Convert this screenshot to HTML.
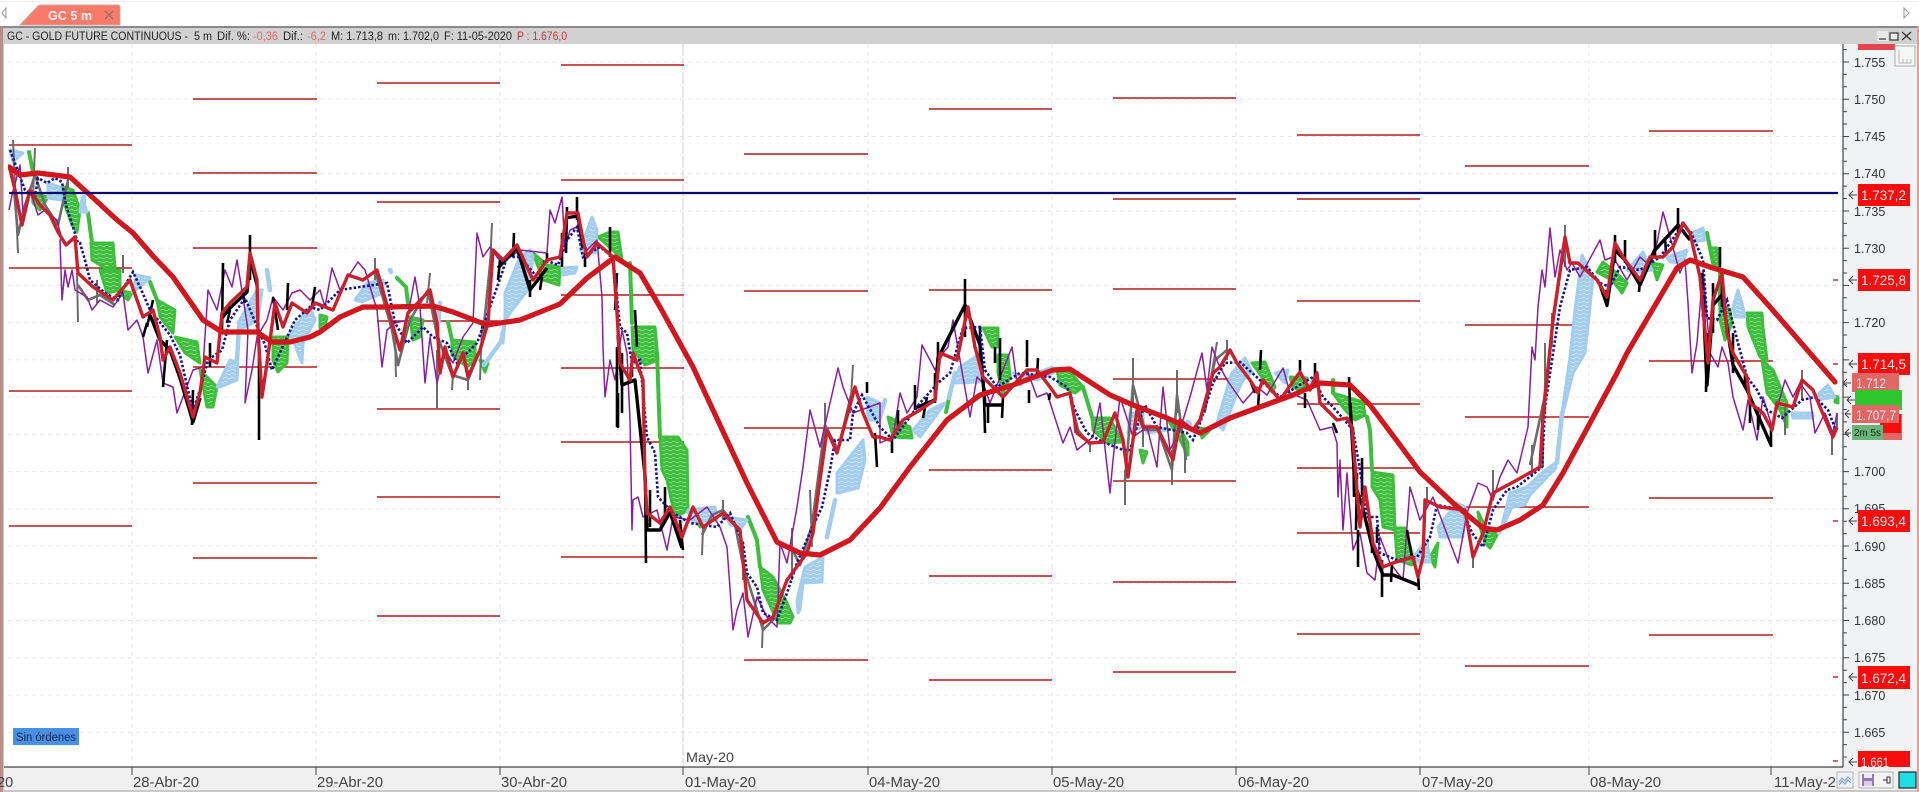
<!DOCTYPE html>
<html lang="es">
<head>
<meta charset="utf-8">
<title>GC 5 m</title>
<style>
html,body{margin:0;padding:0;width:1919px;height:792px;overflow:hidden;background:#fff}
svg{display:block;font-family:"Liberation Sans",Arial,sans-serif}
</style>
</head>
<body>
<svg width="1919" height="792" viewBox="0 0 1919 792" xmlns="http://www.w3.org/2000/svg">
<defs>
<pattern id="pg" width="7" height="4" patternUnits="userSpaceOnUse"><rect width="7" height="4" fill="#3dbf3d"/><path d="M0 2 Q1.7 .6 3.5 2 T7 2" fill="none" stroke="#a8e2a2" stroke-width=".7"/></pattern>
<pattern id="pb" width="7" height="4" patternUnits="userSpaceOnUse"><rect width="7" height="4" fill="#a2cdee"/><path d="M0 2 Q1.7 .6 3.5 2 T7 2" fill="none" stroke="#dcedfa" stroke-width=".7"/></pattern>
<clipPath id="chart"><rect x="8" y="44" width="1835" height="723"/></clipPath>
</defs>

<!-- window -->
<rect width="1919" height="792" fill="#fff"/>
<rect y="1" width="1919" height="1" fill="#eeeeee"/>
<path d="M6 8 L2 13 L6 18 Z" fill="none" stroke="#999"/>
<path d="M1904 8 L1909 13 L1904 18 Z" fill="none" stroke="#999"/>
<path d="M20 25 L38 6 Q39 5 41 5 L118 5 Q120 5 120 7 L120 25 Z" fill="#f97a6b" stroke="#c9a79f"/>
<text x="48" y="20" font-size="12.5" font-weight="bold" fill="#fdeeea" textLength="44" lengthAdjust="spacingAndGlyphs">GC 5 m</text>
<path d="M105 11 L113 19 M113 11 L105 19" stroke="#a06e66" stroke-width="1.3"/>

<rect y="26" width="1917" height="2" fill="#8a8a8a"/>
<rect y="28" width="1917" height="16" fill="#d1d1d1"/>
<rect x="0" y="26" width="3" height="766" fill="#b58f88"/>
<rect x="3" y="28" width="1" height="764" fill="#d8c8c4"/>
<rect x="1917" y="26" width="2" height="766" fill="#eb9c8e"/>

<!-- header text -->
<g font-size="11.5" fill="#222">
<text x="7" y="40" textLength="181" lengthAdjust="spacingAndGlyphs">GC - GOLD FUTURE CONTINUOUS -</text>
<text x="194" y="40" textLength="18" lengthAdjust="spacingAndGlyphs">5 m</text>
<text x="217" y="40" textLength="33" lengthAdjust="spacingAndGlyphs">Dif. %:</text>
<text x="253" y="40" textLength="25" lengthAdjust="spacingAndGlyphs" fill="#e26a6a">-0,36</text>
<text x="283" y="40" textLength="20" lengthAdjust="spacingAndGlyphs">Dif.:</text>
<text x="307" y="40" textLength="19" lengthAdjust="spacingAndGlyphs" fill="#e26a6a">-6,2</text>
<text x="331" y="40" textLength="52" lengthAdjust="spacingAndGlyphs">M: 1.713,8</text>
<text x="388" y="40" textLength="51" lengthAdjust="spacingAndGlyphs">m: 1.702,0</text>
<text x="444" y="40" textLength="68" lengthAdjust="spacingAndGlyphs">F: 11-05-2020</text>
<text x="517" y="40" textLength="50" lengthAdjust="spacingAndGlyphs" fill="#c8343c">P : 1.676,0</text>
</g>

<!-- axes backgrounds -->
<rect x="1843" y="44" width="74" height="723" fill="#f0f2f4"/>
<rect x="4" y="767" width="1913" height="23" fill="#f0f0f0"/>
<rect x="4" y="790" width="1913" height="2" fill="#c9c9c9"/>

<!-- grid -->
<g stroke="#e6e6e6" stroke-width="1" stroke-dasharray="4 4" fill="none">
<path d="M8 62H1843M8 99.2H1843M8 136.5H1843M8 173.7H1843M8 211H1843M8 248.2H1843M8 285.4H1843M8 322.6H1843M8 359.9H1843M8 397.1H1843M8 434.4H1843M8 471.6H1843M8 508.8H1843M8 546H1843M8 583.3H1843M8 620.5H1843M8 657.8H1843M8 695H1843M8 732.2H1843"/>
<path d="M132 44V767M316 44V767M500 44V767M868 44V767M1052 44V767M1236 44V767M1420 44V767M1589 44V767M1771 44V767"/>
</g>
<path d="M683 44V767" stroke="#cfcfcf" stroke-width="1" stroke-dasharray="12 2"/>

<!-- pivot lines -->
<path fill="none" stroke="#ad1f1f" stroke-width="1.4" d="
M9 145H132M9 268H132M9 391H132M9 526H132
M193 99H317M193 173H317M193 248H317M193 367H317M193 483H317M193 558H317
M377 83H500M377 202H500M377 321H500M377 409H500M377 497H500M377 616H500
M561 65H684M561 180H684M561 295H684M561 368H684M561 442H684M561 557H684
M744 154H868M744 291H868M744 428H868M744 660H868
M929 109H1052M929 290H1052M929 470H1052M929 576H1052M929 680H1052
M1113 98H1236M1113 199H1236M1113 289H1236M1113 379H1236M1113 481H1236M1113 582H1236M1113 672H1236
M1297 135H1420M1297 199H1420M1297 301H1420M1297 404H1420M1297 468H1420M1297 533H1420M1297 634H1420
M1465 166H1589M1465 325H1589M1465 417H1589M1465 507H1589M1465 666H1589
M1649 131H1773M1649 361H1773M1649 498H1773M1649 635H1773"/>
<path fill="none" stroke="#c83030" stroke-width="1.5" d="M1833 280h5M1833 364h5M1833 521h5M1833 677h5M1833 761h5"/>

<g clip-path="url(#chart)">
<!-- clouds: green -->
<path fill="url(#pg)" stroke="#3dbf3d" stroke-width="3" stroke-linejoin="round" d="
M32 193L48 197L40 210L33 203Z
M63 187L73 190L80 210L77 232L72 225L63 200Z
M91 243L113 243L115 267L105 268L92 260Z
M100 270L120 270L120 290L107 293Z
M117 290L132 293L128 300Z
M157 300L175 310L173 333L160 317Z
M175 337L197 342L200 363L185 353Z
M200 370L217 387L213 407L207 407Z
M273 337L288 337L287 363L278 372L273 360Z
M320 315L327 317L325 327L320 328Z
M410 317L423 320L420 337L413 340Z
M452 340L475 342L475 360L467 367L452 355Z
M480 360L488 363L485 372Z
M533 253L547 265L560 267L559 285L543 280Z
M598 237L610 232L618 232L622 260L615 252Z
M632 327L655 327L658 360L645 365L633 350Z
M660 437L678 437L687 450L688 510L675 517L667 480L662 470Z
M695 513L702 515L700 527Z
M760 567L773 577L787 603L793 617L790 623L778 623L763 590Z
M888 417L910 427L912 438L893 437Z
M983 328L998 328L998 347L992 347Z
M998 355L1008 355L1010 377L1003 393L998 373Z
M1057 370L1070 372L1083 387L1075 393L1060 385Z
M1092 418L1110 418L1122 442L1107 443L1093 430Z
M1140 450L1147 452L1143 463Z
M1168 420L1177 423L1188 443L1188 455L1180 440Z
M1200 428L1210 430L1202 438Z
M1252 363L1265 362L1275 387L1272 392L1257 370Z
M1290 377L1307 378L1302 392L1293 387Z
M1333 393L1363 402L1365 415L1355 420L1345 410Z
M1372 472L1393 475L1395 530L1383 527L1380 500L1372 487Z
M1395 528L1405 528L1413 557L1412 565L1397 560Z
M1430 557L1438 543L1435 567Z
M1478 512L1487 530L1497 535L1490 548L1485 543L1480 527Z
M1597 272L1603 262L1613 270L1627 283L1622 293L1612 280Z
M1652 263L1663 265L1657 280Z
M1710 248L1717 248L1720 270L1715 268Z
M1720 303L1730 310L1732 323L1725 340L1720 320Z
M1747 313L1762 313L1763 327L1767 360L1760 357L1748 327Z
M1762 360L1773 370L1787 403L1787 427L1780 410L1767 393Z
M1835 396l3 1l0 6l-3 -1Z"/>
<path fill="none" stroke="#3dbf3d" stroke-width="4" stroke-linecap="round" stroke-linejoin="round" d="
M29 152L33 172M88 213L92 243M150 282L157 300M397 278L406 287L408 303M448 322L452 340M630 263L632 323M657 353L660 437M748 517L757 540L760 567M1083 387L1092 417M1333 380L1333 393M1367 417L1370 430L1372 470M1707 233L1713 263M1720 270L1720 305M949 398L946 412"/>

<!-- clouds: blue -->
<path fill="url(#pb)" stroke="#a2cdee" stroke-width="3" stroke-linejoin="round" d="
M10 150L23 153L13 162Z
M48 183L60 187L62 200L48 198Z
M82 198L87 212L80 212Z
M137 275L150 278L140 287L132 292Z
M217 387L230 360L238 363L237 380L220 387Z
M238 323L257 290L262 290L258 320L240 330Z
M290 333L310 307L315 320L303 343L302 363Z
M355 300L367 283L383 280L383 293L362 302Z
M500 343L505 320L505 293L520 257L530 250L533 257L528 290L510 313L505 322L503 343Z
M562 268L577 267L575 273L563 275Z
M580 250L592 217L597 230L595 253L583 253Z
M688 510L715 507L717 520L693 522Z
M727 517L747 520L742 527L730 525Z
M798 613L797 600L805 567L823 557L822 582L803 583L800 610Z
M837 493L837 473L863 440L865 460L858 488L838 493Z
M867 397L880 403L880 420L868 420Z
M913 430L930 410L945 403L935 417L920 437Z
M952 383L960 367L978 355L980 382L953 383Z
M1013 373L1027 377L1052 367L1053 373L1037 380Z
M1130 413L1143 413L1143 427L1128 433Z
M1147 425L1167 430L1147 433Z
M1217 423L1228 385L1232 373L1245 358L1252 372L1243 380L1237 393L1223 430Z
M1275 373L1288 370L1285 383Z
M1310 385L1317 372L1318 380Z
M1413 557L1427 540L1430 562L1417 562Z
M1438 527L1457 503L1465 507L1463 537L1440 537Z
M1500 533L1510 493L1527 487L1543 472L1555 463L1556 468L1530 495L1525 505L1512 507Z
M1562 413L1570 357L1575 310L1582 255L1593 277L1590 307L1585 353L1573 373L1563 413Z
M1627 270L1643 252L1652 270L1633 273Z
M1667 257L1687 250L1683 263L1670 262Z
M1692 233L1703 228L1705 240L1693 242Z
M1733 307L1738 290L1743 307L1745 317L1735 317Z
M1792 413L1813 413L1813 418L1793 418Z
M1815 397L1828 385L1835 397L1817 400Z"/>
<path fill="none" stroke="#a2cdee" stroke-width="4.5" stroke-linecap="round" stroke-linejoin="round" d="
M239 327L237 360M267 270L270 290M440 303L437 337M390 270L391 272M484 365L500 343M827 537L835 500M949 398L955 373M885 400L880 417M1557 463L1562 413M692 510L688 512M1020 382L1021 384M1188 422L1190 424M84 197L84 205"/>

<!-- gray bars -->
<path fill="none" stroke="#6c6c6c" stroke-width="2" d="
M13 140L18 253M35 148L33 197M68 167L68 188M77 273L78 322M123 255L123 273M97 280L97 303
M375 258L375 280M395 337L396 377M430 273L427 303M437 350L437 408M453 373L452 390M468 370L468 390M482 323L480 380M492 223L490 267
M703 527L702 555M723 500L723 520M743 543L743 580M763 620L762 648M792 528L792 580M810 490L812 547M825 403L825 447M853 365L850 413
M1133 358L1133 403M1125 470L1125 505M1072 397L1075 433M1090 443L1090 452M1143 427L1143 447M1177 370L1177 413M1172 450L1172 485M1185 447L1185 473
M1217 342L1205 413M1227 340L1227 360M1427 487L1427 507M1493 470L1493 493M1473 550L1473 568
M1532 445L1532 477M1543 417L1543 467M1545 343L1545 413M1552 313L1552 347M1565 225L1565 267M1802 370L1802 400M1785 407L1785 435M1832 430L1832 455M1837 413L1837 427"/>
<g fill="none" stroke="#6c6c6c" stroke-width="2.6" stroke-linejoin="round">
<polyline points="14,190 18,235 25,205 35,175 45,205 58,225 68,180"/>
<polyline points="78,285 88,300 100,295 115,305"/>
<polyline points="375,270 392,330 398,365 410,320 428,290 437,335 452,375 468,380 482,345 491,255"/>
<polyline points="702,535 712,515 723,510 735,525 743,565 757,610 763,630 775,618"/>
<polyline points="790,545 800,565 812,525 825,425 838,450 851,395"/>
<polyline points="1073,410 1078,430 1090,445"/>
<polyline points="1125,480 1133,385 1145,430 1158,430 1172,470 1177,395 1186,460"/>
<polyline points="1207,400 1215,360 1227,350"/>
<polyline points="1530,465 1544,400 1552,330 1565,240 1570,262"/>
</g>

<!-- purple -->
<polyline fill="none" stroke="#8a1f9e" stroke-width="1.5" stroke-linejoin="round" points="9,210 12,195 20,165 23,213 30,190 38,215 45,210 50,215 57,220 62,240 60,240 62,300 65,270 68,287 72,270 75,290 87,297 92,310 100,300 113,307 123,293 128,330 137,320 143,337 148,373 157,340 163,383 173,387 177,413 183,397 193,370 203,367 208,290 217,310 225,270 232,287 237,260 243,297 248,330 245,403 252,370 257,337 267,320 273,297 283,310 292,293 300,290 310,300 320,290 325,307 332,268 340,290 348,277 358,262 365,270 377,310 382,367 387,330 395,323 407,320 415,277 420,307 425,383 430,337 437,383 445,350 453,363 463,337 473,323 477,233 483,257 490,247 497,257 502,263 510,257 520,250 547,253 550,210 555,223 562,197 565,250 570,230 577,227 587,250 597,240 602,297 603,347 605,397 610,360 615,380 622,330 627,353 630,420 632,530 633,500 638,497 643,517 657,510 667,550 673,517 690,520 707,507 720,527 727,547 733,630 737,610 743,593 748,637 757,597 767,617 777,627 780,543 787,563 797,507 803,467 810,410 820,447 833,390 838,368 843,387 853,413 880,403 880,443 893,437 900,393 907,413 917,397 922,345 930,360 935,370 943,353 948,347 953,320 960,360 970,417 977,377 983,383 990,403 1012,347 1017,383 1027,370 1037,397 1047,393 1063,443 1070,427 1077,450 1093,437 1100,403 1110,493 1113,460 1120,397 1133,437 1147,427 1157,467 1163,387 1170,450 1180,430 1190,397 1200,360 1202,353 1207,390 1212,347 1218,363 1227,380 1243,403 1257,387 1267,395 1283,368 1290,393 1307,400 1320,430 1332,427 1337,443 1338,497 1340,460 1343,530 1347,473 1353,550 1360,533 1367,573 1375,580 1380,537 1390,563 1403,580 1410,487 1420,520 1433,497 1453,550 1458,563 1467,513 1478,483 1487,487 1493,500 1500,477 1508,460 1517,473 1528,427 1532,347 1535,360 1538,307 1542,270 1545,287 1550,228 1555,277 1560,250 1567,270 1572,263 1580,277 1600,240 1605,260 1613,257 1627,280 1640,257 1647,263 1657,243 1663,212 1670,237 1680,273 1685,260 1688,303 1692,373 1697,343 1703,270 1710,353 1718,367 1722,347 1728,363 1733,397 1743,430 1748,400 1757,440 1763,397 1772,427 1785,380 1793,397 1800,383 1810,397 1815,433 1825,413 1833,433 1837,413"/>

<!-- black bars -->
<path fill="none" stroke="#000" stroke-width="2.6" d="
M193 390L192 425M210 343L210 367M167 340L163 387M147 323L143 337M153 300L147 327M223 263L222 330M250 235L250 280M259 337L259 440M273 297L278 330M288 283L287 310M315 287L312 307M230 310L227 323M242 290L245 303
M500 260L498 280M514 233L513 257M530 280L530 297M542 277L540 290M547 253L547 263M562 233L562 267M567 207L566 253M577 197L577 220M585 253L585 267M610 227L610 257M617 273L615 310M622 357L622 400M618 393L618 428M632 357L632 377
M635 310L637 347M617 347L617 427M622 353L622 413M645 467L646 563M650 490L650 527M665 487L665 523M680 520L683 550M867 382L867 393M875 433L877 467
M892 437L892 453M898 410L898 430M915 385L915 410M927 397L923 418M935 373L935 403M938 342L938 367M965 279L965 337M980 327L980 357M984 397L985 433M988 403L988 423M1000 338L1000 380M995 347L995 363M1003 397L1002 418M1027 340L1027 367M1029 390L1029 403M1038 358L1037 377M1050 393L1049 400
M1261 350L1260 370M1259 393L1258 407M1250 380L1255 393M1300 360L1300 373M1315 363L1315 387M1305 393L1305 408M1349 377L1350 407M1333 423L1337 433M1353 427L1354 497M1357 473L1356 530M1362 458L1362 497M1358 530L1358 567M1372 540L1372 553M1377 527L1377 543M1382 560L1382 597M1392 563L1391 582M1407 530L1412 557M1418 573L1419 590
M1615 235L1615 263M1625 240L1625 263M1606 290L1607 307M1655 230L1655 257M1665 237L1666 253M1678 208L1678 233M1640 280L1639 292M1702 273L1703 317M1707 333L1706 392M1713 283L1713 333M1720 247L1720 267M1722 273L1722 307M1733 333L1733 373M1745 373L1745 387M1750 400L1750 423M1758 407L1758 430M1771 427L1771 447"/>
<g fill="none" stroke="#000" stroke-width="3.4" stroke-linejoin="round">
<polyline points="150,315 160,340 170,350 180,378 193,422 200,398"/>
<polyline points="222,318 230,308 247,292 250,258 257,285"/>
<polyline points="498,268 517,248 530,290 547,268"/>
<polyline points="565,218 578,216 583,248"/>
<polyline points="618,335 622,385 635,380 645,475 647,530 660,530 670,512 682,548"/>
<polyline points="915,408 935,400 938,358 965,305 980,345 985,405 1003,405"/>
<polyline points="1350,403 1355,485 1362,505 1373,550 1383,575 1393,575 1418,585"/>
<polyline points="1703,295 1707,385 1713,305 1722,295 1733,365 1747,390 1771,445"/>
<polyline points="1600,285 1607,305 1615,250 1625,260 1640,285 1655,250 1678,225 1690,240"/>
</g>

<!-- navy dotted -->
<polyline fill="none" stroke="#13139a" stroke-width="2.6" stroke-dasharray="2.5 2" points="10,150 25,190 35,197 38,178 47,183 55,178 62,182 66,205 78,243 80,243 85,260 90,280 105,293 118,300 125,285 133,272 140,287 150,310 170,335 180,355 188,390 193,410 200,390 208,360 222,350 230,320 245,298 265,345 272,370 295,320 310,307 320,310 340,290 353,288 387,283 395,323 407,343 423,327 433,337 447,343 457,363 477,343 490,307 502,273 507,257 520,257 537,277 545,260 558,265 567,240 577,227 583,257 600,247 613,257 620,327 627,333 632,363 640,360 647,437 655,453 658,497 673,513 690,523 717,527 730,513 743,543 747,573 757,587 763,613 777,620 787,593 797,563 808,537 822,507 830,470 835,440 850,440 853,413 862,395 880,427 893,440 920,403 938,383 950,373 963,328 980,327 985,370 997,387 1020,373 1050,377 1067,387 1075,410 1087,433 1103,442 1123,450 1130,450 1138,423 1145,405 1157,427 1187,433 1193,440 1200,423 1213,383 1225,363 1240,362 1260,380 1280,397 1313,377 1323,397 1333,407 1353,430 1360,470 1367,517 1377,517 1380,553 1397,560 1417,557 1430,537 1437,505 1463,510 1472,533 1483,547 1493,510 1507,490 1517,487 1542,467 1545,407 1560,307 1570,270 1587,267 1600,283 1610,287 1620,267 1640,270 1660,257 1677,233 1690,230 1703,260 1707,318 1717,320 1727,300 1738,343 1747,377 1757,390 1767,410 1782,418 1802,400 1815,397 1828,410 1835,428"/>

<!-- thin red -->
<polyline fill="none" stroke="#c9202c" stroke-width="3.4" stroke-linejoin="round" points="9,165 15,190 22,225 30,190 40,205 50,215 58,232 66,245 75,237 78,273 93,287 113,300 130,280 143,317 153,310 160,337 163,360 170,347 180,373 193,417 200,393 205,357 217,363 222,313 230,303 247,287 250,253 257,280 258,330 262,397 267,363 275,303 283,327 292,303 307,313 315,303 333,310 348,275 363,280 377,270 392,323 400,350 408,313 430,290 437,323 440,373 445,347 453,377 463,353 468,377 480,350 488,323 493,250 500,257 503,260 517,245 533,280 547,260 560,257 567,213 578,213 583,240 587,257 597,243 613,257 617,313 620,363 630,380 633,353 643,380 645,480 647,513 660,523 670,507 682,537 693,507 703,527 723,513 740,530 747,600 763,623 773,617 787,580 807,553 813,533 820,480 827,430 837,453 855,387 863,413 873,437 880,437 890,440 903,420 920,410 935,400 940,353 957,360 968,307 975,347 983,377 1003,397 1027,370 1037,370 1050,387 1057,397 1070,393 1077,433 1090,443 1103,442 1115,413 1123,440 1128,477 1137,410 1143,427 1157,427 1173,460 1180,420 1193,430 1200,420 1213,373 1220,367 1230,350 1237,363 1250,380 1258,393 1263,380 1280,400 1300,372 1310,390 1317,373 1320,403 1337,420 1347,418 1352,427 1357,490 1360,527 1365,487 1373,543 1383,567 1393,563 1413,557 1418,577 1423,557 1425,500 1440,507 1465,510 1473,557 1483,533 1493,493 1517,480 1540,467 1543,417 1553,320 1565,237 1570,263 1578,263 1597,280 1607,297 1615,243 1623,257 1640,280 1650,257 1663,257 1673,247 1683,223 1690,233 1700,277 1708,363 1713,300 1722,273 1727,333 1733,353 1747,377 1750,403 1763,413 1772,430 1777,403 1793,407 1802,380 1813,390 1820,407 1833,437 1837,427"/>

<!-- thick MA -->
<polyline fill="none" stroke="#d2161e" stroke-width="5.2" stroke-linejoin="round" stroke-linecap="round" points="9,167 20,175 38,173 70,177 90,195 117,220 133,233 153,256 173,277 203,320 222,332 257,332 272,342 290,342 310,337 320,332 340,317 363,307 390,307 433,306 453,312 487,325 520,320 560,304 587,278 615,257 640,273 660,307 693,367 713,410 747,483 777,542 800,553 820,555 850,540 880,508 910,467 947,420 980,395 1013,385 1053,370 1070,369 1110,395 1133,405 1167,418 1200,433 1230,418 1257,408 1293,395 1320,383 1350,385 1370,405 1400,445 1420,472 1453,503 1483,528 1497,530 1520,520 1543,505 1563,473 1617,373 1627,353 1677,268 1690,260 1713,268 1743,277 1770,307 1835,382"/>

<!-- resistance line -->
<path d="M9 193H1838" stroke="#0a0a6e" stroke-width="2.2"/>
</g>

<!-- May-20 -->
<text x="686" y="762" font-size="14" fill="#444" textLength="48" lengthAdjust="spacingAndGlyphs">May-20</text>

<!-- orders -->
<rect x="13" y="728" width="66" height="17" fill="#4a90e2"/>
<text x="16" y="741" font-size="11.5" fill="#0f2a55" textLength="60" lengthAdjust="spacingAndGlyphs">Sin órdenes</text>

<!-- axis lines -->
<path d="M1843 44V767M4 767H1843" stroke="#444" stroke-width="1.2" fill="none"/>
<!-- time ticks -->
<path d="M132 767v8M316 767v8M500 767v8M683 767v8M868 767v8M1052 767v8M1236 767v8M1420 767v8M1589 767v8M1771 767v8" stroke="#444" stroke-width="1"/>

<!-- time labels -->
<g font-size="14.5" fill="#444">
<text x="-3" y="787">20</text>
<text x="133" y="787" textLength="66" lengthAdjust="spacingAndGlyphs">28-Abr-20</text>
<text x="317" y="787" textLength="66" lengthAdjust="spacingAndGlyphs">29-Abr-20</text>
<text x="501" y="787" textLength="66" lengthAdjust="spacingAndGlyphs">30-Abr-20</text>
<text x="685" y="787" textLength="71" lengthAdjust="spacingAndGlyphs">01-May-20</text>
<text x="869" y="787" textLength="71" lengthAdjust="spacingAndGlyphs">04-May-20</text>
<text x="1053" y="787" textLength="71" lengthAdjust="spacingAndGlyphs">05-May-20</text>
<text x="1238" y="787" textLength="71" lengthAdjust="spacingAndGlyphs">06-May-20</text>
<text x="1422" y="787" textLength="71" lengthAdjust="spacingAndGlyphs">07-May-20</text>
<text x="1590" y="787" textLength="71" lengthAdjust="spacingAndGlyphs">08-May-20</text>
<text x="1774" y="787" textLength="62" lengthAdjust="spacingAndGlyphs">11-May-2</text>
</g>

<!-- price ticks -->
<path stroke="#444" stroke-width="1" fill="none" d="M1843 62h6M1843 99.2h6M1843 136.5h6M1843 173.7h6M1843 211h6M1843 248.2h6M1843 285.4h6M1843 322.6h6M1843 359.9h6M1843 397.1h6M1843 434.4h6M1843 471.6h6M1843 508.8h6M1843 546h6M1843 583.3h6M1843 620.5h6M1843 657.8h6M1843 695h6M1843 732.2h6
M1843 49.6h4M1843 74.4h4M1843 86.8h4M1843 111.6h4M1843 124h4M1843 148.9h4M1843 161.3h4M1843 186.1h4M1843 198.5h4M1843 223.4h4M1843 235.8h4M1843 260.6h4M1843 273h4M1843 297.8h4M1843 310.2h4M1843 335h4M1843 347.5h4M1843 372.3h4M1843 384.7h4M1843 409.5h4M1843 421.9h4M1843 446.8h4M1843 459.2h4M1843 484h4M1843 496.4h4M1843 521.2h4M1843 533.6h4M1843 558.4h4M1843 570.8h4M1843 595.7h4M1843 608.1h4M1843 632.9h4M1843 645.3h4M1843 670.2h4M1843 682.6h4M1843 707.4h4M1843 719.8h4M1843 744.6h4M1843 757h4"/>

<!-- price labels -->
<g font-size="12.5" fill="#333">
<text x="1854" y="67">1.755</text><text x="1854" y="104">1.750</text><text x="1854" y="141">1.745</text><text x="1854" y="178">1.740</text><text x="1854" y="216">1.735</text><text x="1854" y="253">1.730</text><text x="1854" y="327">1.720</text><text x="1854" y="476">1.700</text><text x="1854" y="513">1.695</text><text x="1854" y="551">1.690</text><text x="1854" y="588">1.685</text><text x="1854" y="625">1.680</text><text x="1854" y="662">1.675</text><text x="1854" y="700">1.670</text><text x="1854" y="737">1.665</text>
</g>

<!-- top tag & chart icon -->
<rect x="1858" y="44" width="37" height="6" fill="#e2474f"/>
<rect x="1895" y="46" width="20" height="20" fill="#f6f6f6" stroke="#a9a9a9"/>
<path d="M1899 50v13h12M1903 59v4M1907 59v4M1911 59v4" stroke="#b5b5b5" fill="none"/>

<!-- window buttons -->
<rect x="1877" y="31" width="11" height="10" fill="#e8e8e8"/>
<path d="M1879 39h7" stroke="#333" stroke-width="1.2"/>
<rect x="1890" y="33" width="8" height="7" fill="#eee" stroke="#333" stroke-width="1.2"/>
<path d="M1902 32l9 8M1911 32l-9 8" stroke="#333" stroke-width="1.3"/>

<!-- arrows -->
<path stroke="#444" stroke-width="1" fill="none" d="M1857 195H1849M1853 191L1849 195L1853 199
M1857 280H1849M1853 276L1849 280L1853 284
M1857 364H1849M1853 360L1849 364L1853 368
M1851 383H1843M1847 379L1843 383L1847 387
M1855 400H1847M1851 396L1847 400L1851 404
M1851 414H1845M1849 410L1845 414L1849 418
M1851 433H1845M1849 429L1845 433L1849 437
M1857 521H1849M1853 517L1849 521L1853 525
M1857 677H1849M1853 673L1849 677L1853 681
M1857 762H1849M1853 758L1849 762L1853 766"/>

<!-- red tags -->
<g font-size="14" fill="#fbe4e4">
<rect x="1858" y="184" width="52" height="22" fill="#f80d0d"/><text x="1861" y="200" textLength="45" lengthAdjust="spacingAndGlyphs">1.737,2</text>
<rect x="1858" y="269" width="52" height="22" fill="#f80d0d"/><text x="1861" y="285" textLength="45" lengthAdjust="spacingAndGlyphs">1.725,8</text>
<rect x="1858" y="510" width="52" height="22" fill="#f80d0d"/><text x="1861" y="526" textLength="45" lengthAdjust="spacingAndGlyphs">1.693,4</text>
<rect x="1858" y="666" width="52" height="23" fill="#f80d0d"/><text x="1861" y="683" textLength="45" lengthAdjust="spacingAndGlyphs">1.672,4</text>
<rect x="1858" y="751" width="52" height="16" fill="#f80d0d"/><text x="1861" y="767" textLength="28" lengthAdjust="spacingAndGlyphs">1.661</text>
<rect x="1858" y="353" width="52" height="22" fill="#f80d0d"/><text x="1861" y="369" textLength="45" lengthAdjust="spacingAndGlyphs">1.714,5</text>
<rect x="1852" y="373" width="47" height="19" fill="#e26666"/><text x="1856" y="388" textLength="30" lengthAdjust="spacingAndGlyphs">1.712</text>
<rect x="1855" y="390" width="47" height="20" fill="#2ec82e"/>
<rect x="1880" y="414" width="22" height="26" fill="#e26666"/>
<rect x="1880" y="414" width="21" height="19" fill="#f80d0d"/>
<rect x="1852" y="405" width="47" height="18" fill="#e26666"/><text x="1856" y="420" textLength="40" lengthAdjust="spacingAndGlyphs">1.707,7</text>
</g>
<rect x="1852" y="425" width="31" height="15" fill="#6db37c"/>
<text x="1854" y="436" font-size="10.5" fill="#10301a" textLength="27" lengthAdjust="spacingAndGlyphs">2m 5s</text>

<!-- bottom-right icons -->
<rect x="1837" y="772" width="16" height="16" fill="#eef1f6" stroke="#b4b4b4"/>
<path d="M1839 782l3-4 3 3 3-4 3 3M1839 785l3-4 3 3 3-4 3 3" fill="none" stroke="#7f9fd8" stroke-width="1.1"/>
<rect x="1859" y="772" width="34" height="16" fill="#f4f4f4" stroke="#b4b4b4"/>
<rect x="1862" y="774" width="12" height="12" fill="#8f7ab8"/>
<rect x="1864" y="774" width="8" height="4" fill="#efeaf6"/>
<rect x="1864" y="781" width="8" height="5" fill="#d9d0e8"/>
<path d="M1883 780h4M1887 777v6h3v-6Z" fill="none" stroke="#333"/>
<rect x="1899" y="772" width="17" height="16" fill="#1fdde2" stroke="#333" stroke-width="1.3"/>
</svg>
</body>
</html>
